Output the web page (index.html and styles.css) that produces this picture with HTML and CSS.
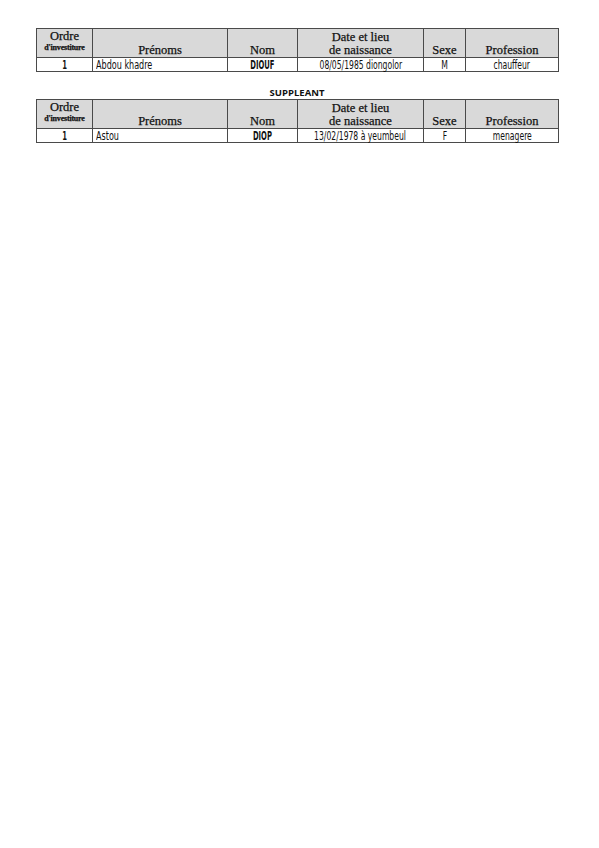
FILE: index.html
```html
<!DOCTYPE html>
<html lang="fr">
<head>
<meta charset="utf-8">
<title>Liste</title>
<link rel="stylesheet" href="styles.css">
</head>
<body>
<div class="page">
  <table class="grid">
    <colgroup>
      <col class="c-ordre"><col class="c-prenom"><col class="c-nom"><col class="c-date"><col class="c-sexe"><col class="c-prof">
    </colgroup>
    <thead>
      <tr class="head">
        <th class="ordre"><span class="o1">Ordre</span><span class="o2">d'investiture</span></th>
        <th>Prénoms</th>
        <th>Nom</th>
        <th>Date et lieu<br>de naissance</th>
        <th>Sexe</th>
        <th>Profession</th>
      </tr>
    </thead>
    <tbody>
      <tr class="row">
        <td class="bold"><span class="nar">1</span></td>
        <td class="left"><span class="nar">Abdou khadre</span></td>
        <td class="bold"><span class="nar">DIOUF</span></td>
        <td><span class="nar">08/05/1985 diongolor</span></td>
        <td><span class="nar">M</span></td>
        <td><span class="nar">chauffeur</span></td>
      </tr>
    </tbody>
  </table>

  <div class="label">SUPPLEANT</div>

  <table class="grid">
    <colgroup>
      <col class="c-ordre"><col class="c-prenom"><col class="c-nom"><col class="c-date"><col class="c-sexe"><col class="c-prof">
    </colgroup>
    <thead>
      <tr class="head">
        <th class="ordre"><span class="o1">Ordre</span><span class="o2">d'investiture</span></th>
        <th>Prénoms</th>
        <th>Nom</th>
        <th>Date et lieu<br>de naissance</th>
        <th>Sexe</th>
        <th>Profession</th>
      </tr>
    </thead>
    <tbody>
      <tr class="row">
        <td class="bold"><span class="nar">1</span></td>
        <td class="left"><span class="nar">Astou</span></td>
        <td class="bold"><span class="nar">DIOP</span></td>
        <td><span class="nar">13/02/1978 à yeumbeul</span></td>
        <td><span class="nar">F</span></td>
        <td><span class="nar">menagere</span></td>
      </tr>
    </tbody>
  </table>
</div>
</body>
</html>
```
FILE: styles.css
```css
html, body {
  margin: 0;
  padding: 0;
  background: #ffffff;
}

.page {
  padding: 28px 0 0 36px;
  width: 522px;
}

.grid {
  border-collapse: collapse;
  table-layout: fixed;
  width: 522px;
}

.c-ordre { width: 56px; }
.c-prenom { width: 135px; }
.c-nom { width: 70px; }
.c-date { width: 126px; }
.c-sexe { width: 42px; }
.c-prof { width: 93px; }

.grid th,
.grid td {
  border: 1px solid #4a4a4a;
  padding: 0;
  text-align: center;
}

.head { height: 29px; }

.head th {
  background: #d9d9d9;
  font-family: "Liberation Serif", "DejaVu Serif", serif;
  font-weight: normal;
  font-size: 12.5px;
  line-height: 13px;
  color: #111;
  vertical-align: bottom;
  padding-bottom: 0;
  -webkit-text-stroke: 0.25px #111;
}

.head th.ordre {
  vertical-align: top;
  padding-top: 1px;
  padding-bottom: 0;
}

.o1 {
  display: block;
  line-height: 12px;
}

.o2 {
  display: block;
  font-size: 8px;
  line-height: 9px;
  margin-top: 1px;
  font-weight: bold;
  letter-spacing: -0.2px;
}

.row { height: 14px; }

.row td {
  font-family: "DejaVu Sans Condensed", "DejaVu Sans", sans-serif;
  font-stretch: condensed;
  font-size: 11.5px;
  line-height: 12px;
  color: #111;
  vertical-align: middle;
}

.nar {
  display: inline-block;
  transform: scaleX(0.74);
  transform-origin: center;
  white-space: nowrap;
}

.row td.left {
  text-align: left;
  padding-left: 3px;
}

.row td.left .nar {
  transform-origin: left center;
  transform: scaleX(0.78);
}

.row td.bold { font-weight: bold; }
.row td.bold .nar { transform: scaleX(0.66); }

.label {
  font-family: "Open Sans", "Liberation Sans", sans-serif;
  font-weight: bold;
  font-size: 9.5px;
  line-height: 12px;
  text-align: center;
  color: #111;
  width: 522px;
  margin-top: 15px;
  height: 12px;
}
```
